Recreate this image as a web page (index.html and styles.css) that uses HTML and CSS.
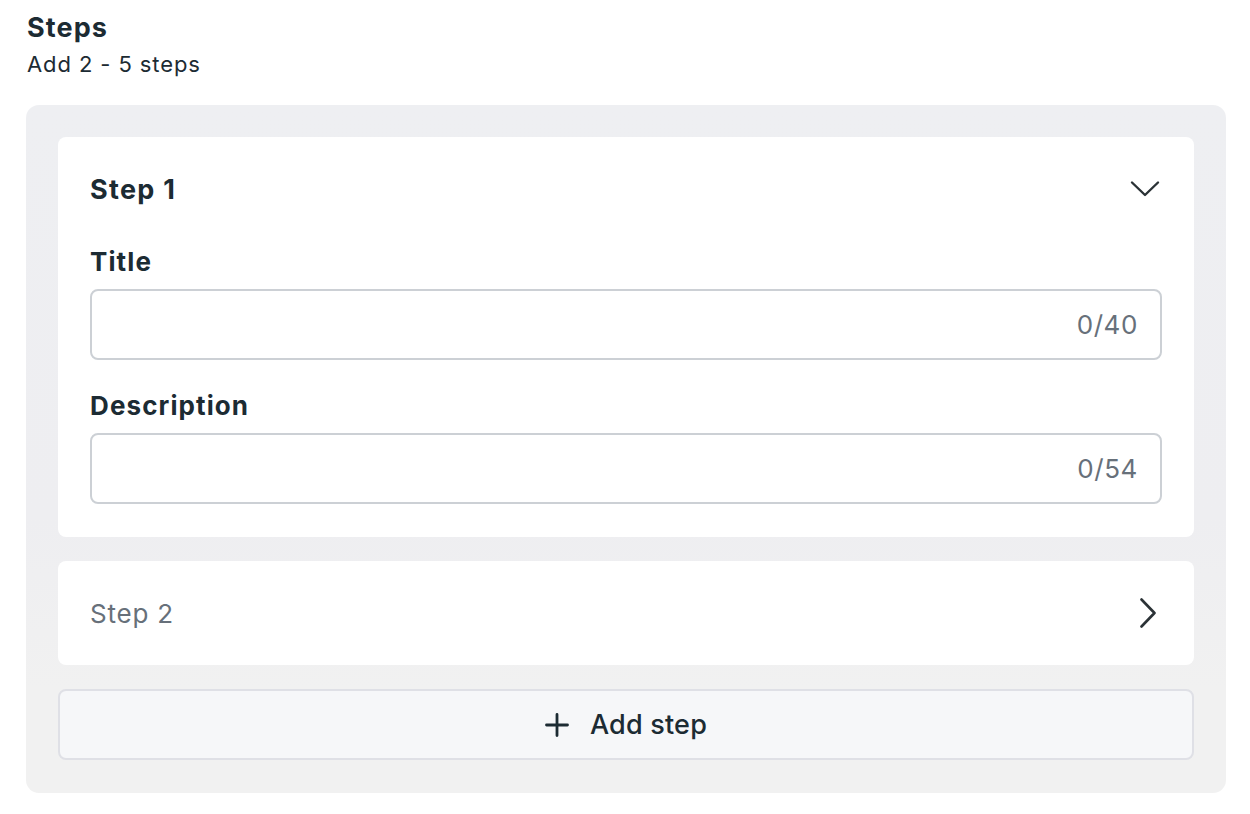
FILE: index.html
```html
<!DOCTYPE html>
<html>
<head>
<meta charset="utf-8">
<link rel="stylesheet" href="styles.css">
</head>
<body>
<div class="page">
  <div class="header">
    <div class="h-title">Steps</div>
    <div class="h-sub">Add 2 - 5 steps</div>
  </div>
  <div class="panel">
    <div class="card card-open">
      <div class="card-head">
        <div class="step-title">Step 1</div>
        <svg class="chev-down" width="30" height="18" viewBox="0 0 30 18"><path d="M2 2.5 L15 15 L28 2.5" fill="none" stroke="#2b3236" stroke-width="2.4" stroke-linecap="round" stroke-linejoin="round"/></svg>
      </div>
      <div class="field">
        <div class="label">Title</div>
        <div class="input"><span class="count">0/40</span></div>
      </div>
      <div class="field">
        <div class="label">Description</div>
        <div class="input"><span class="count">0/54</span></div>
      </div>
    </div>
    <div class="card card-closed">
      <div class="step-closed">Step 2</div>
      <svg class="chev-right" width="18" height="30" viewBox="0 0 18 30"><path d="M2.5 1.5 L15.5 15 L2.5 28.5" fill="none" stroke="#2b3236" stroke-width="2.6" stroke-linecap="round" stroke-linejoin="round"/></svg>
    </div>
    <div class="add-btn">
      <svg class="plus" width="24" height="24" viewBox="0 0 24 24"><path d="M12 1.5 V22.5 M1.5 12 H22.5" stroke="#1c2b33" stroke-width="2.8" stroke-linecap="round"/></svg>
      <span>Add step</span>
    </div>
  </div>
</div>
</body>
</html>
```

FILE: styles.css
```css
* { box-sizing: border-box; }
html, body { margin: 0; padding: 0; background: #ffffff; }
body {
  font-family: Inter, "Noto Sans", "Liberation Sans", sans-serif;
  color: #1c2b33;
}
.page {
  padding: 10px 24px 0 26px;
  width: 1250px;
}
.header { padding-left: 1px; }
.h-title {
  font-size: 27px;
  font-weight: 700;
  line-height: 36px;
  letter-spacing: 1.1px;
}
.h-sub {
  font-size: 22px;
  line-height: 36px;
  letter-spacing: 0.9px;
}
.panel {
  margin-top: 23px;
  width: 1200px;
  background: linear-gradient(180deg, #eeeff2 0%, #eeeef1 60%, #f1f1f1 85%, #f1f1f1 100%);
  border-radius: 13px;
  padding: 32px 32px 33px 32px;
  display: flex;
  flex-direction: column;
  gap: 24px;
}
.card {
  background: #ffffff;
  border-radius: 8px;
}
.card-open {
  padding: 32px;
  display: flex;
  flex-direction: column;
  height: 400px;
}
.card-head {
  display: flex;
  justify-content: space-between;
  align-items: center;
  height: 40px;
}
.step-title {
  font-size: 27px;
  font-weight: 700;
  letter-spacing: 1.3px;
}
.chev-down { margin-right: 2px; }
.field { margin-top: 36px; }
.field + .field { margin-top: 29px; }
.label {
  font-size: 26px;
  font-weight: 700;
  line-height: 34px;
  margin-bottom: 10px;
  letter-spacing: 1.1px;
}
.input {
  height: 71px;
  border: 2px solid #ccd0d5;
  border-radius: 8px;
  display: flex;
  align-items: center;
  justify-content: flex-end;
  padding-right: 22px;
}
.count {
  color: #67707a;
  font-size: 26px;
  letter-spacing: 0.6px;
}
.card-closed {
  height: 104px;
  padding: 0 37px 0 32px;
  display: flex;
  align-items: center;
  justify-content: space-between;
}
.step-closed {
  color: #67707a;
  font-size: 26px;
  letter-spacing: 0.8px;
}
.add-btn {
  height: 71px;
  background: #f6f7f9;
  border: 2px solid #dfe0e6;
  border-radius: 8px;
  display: flex;
  align-items: center;
  justify-content: center;
  gap: 21px;
  font-size: 27px;
  font-weight: 500;
  letter-spacing: 0.2px;
}
```
